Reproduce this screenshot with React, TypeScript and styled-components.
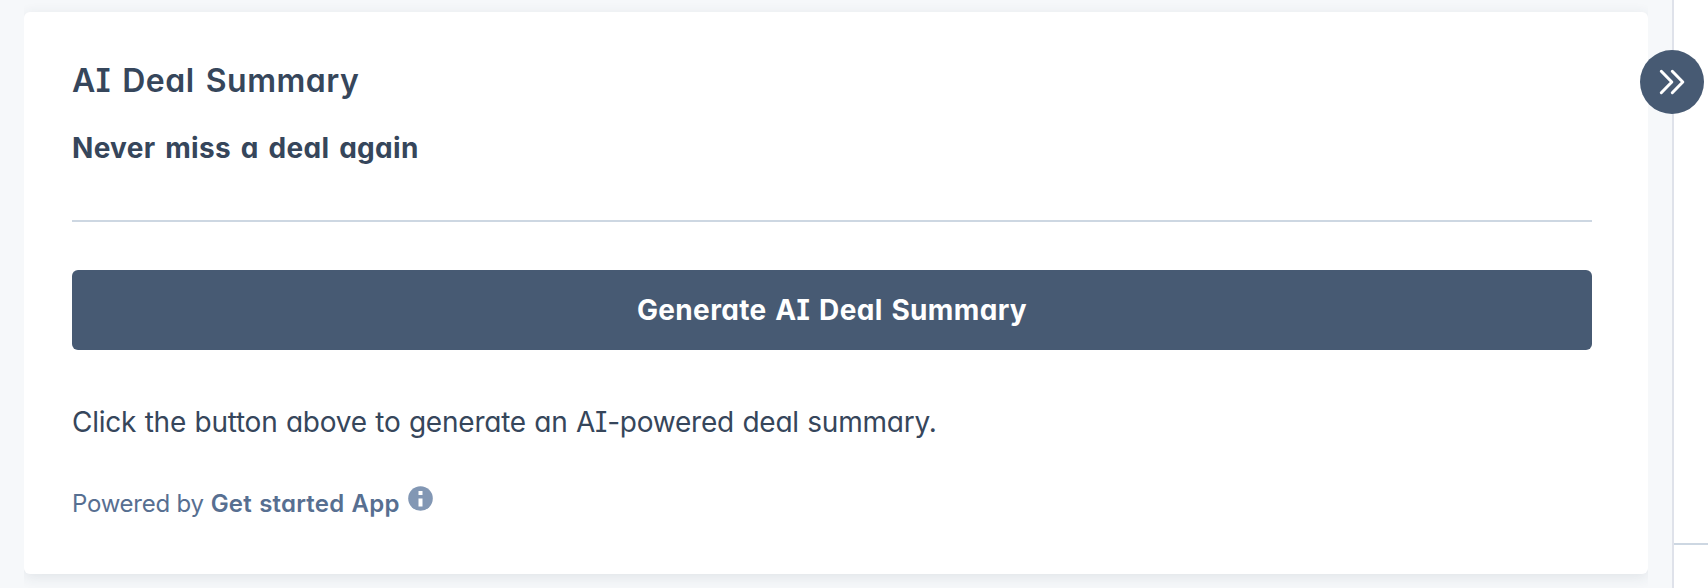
import React from "react";
import styled, { createGlobalStyle } from "styled-components";

const Global = createGlobalStyle`
  * { box-sizing: border-box; }
  body {
    margin: 0;
    background: #fff;
    font-family: Inter, "Noto Sans", sans-serif;
    font-feature-settings: "cv11", "cv08";
  }
`;

const Page = styled.div`
  display: flex;
  height: 588px;
  overflow: hidden;
  color: #36465b;
`;

const Main = styled.main`
  flex: 1;
  padding: 0 24px;
  background: #f6f8fa;
`;

/* Clips the card shadow at the left and right edges of the column */
const CardColumn = styled.div`
  height: 100%;
  padding-top: 12px;
  overflow: hidden;
`;

const Card = styled.section`
  height: 562px;
  padding: 49px 56px 0 48px;
  display: flex;
  flex-direction: column;
  background: #fff;
  border-radius: 6px;
  box-shadow: 0 3px 14px rgba(45, 62, 80, 0.11);
`;

const Title = styled.h2`
  margin: 0;
  font-size: 32px;
  line-height: 40px;
  font-weight: 600;
  letter-spacing: 0.53px;
  word-spacing: 2.4px;
`;

const Subtitle = styled.h3`
  margin: 23px 0 0;
  font-size: 28px;
  line-height: 48px;
  font-weight: 700;
  letter-spacing: 0.3px;
  word-spacing: 2.9px;
`;

const Divider = styled.hr`
  width: 100%;
  height: 2px;
  margin: 48px 0;
  border: 0;
  background: #cdd7e2;
`;

const GenerateButton = styled.button`
  height: 80px;
  flex: none;
  border: 0;
  border-radius: 6px;
  background: #475a73;
  color: #fff;
  font: inherit;
  font-size: 28px;
  font-weight: 700;
  letter-spacing: 0.35px;
  word-spacing: 1.8px;
  font-feature-settings: inherit;
`;

const Message = styled.p`
  margin: 48px 0 0;
  font-size: 28px;
  line-height: 48px;
  letter-spacing: -0.23px;
  word-spacing: 0.8px;
`;

const Footer = styled.footer`
  display: flex;
  margin-top: 40px;
  height: 36px;
  font-size: 24px;
  line-height: 36px;
  font-weight: 400;
  letter-spacing: -0.25px;
  color: #576f91;
`;

const AppName = styled.strong`
  margin-left: 7px;
  font-weight: 600;
  letter-spacing: 0.2px;
  word-spacing: 1px;
`;

const InfoIcon = styled.svg`
  width: 25px;
  height: 25px;
  margin: -0.5px 0 0 8.5px;
`;

const Sidebar = styled.aside`
  position: relative;
  width: 36px;
  border-left: 2px solid #dfe2ea;
  background: #fff;
`;

const SidebarSection = styled.div`
  height: 545px;
  border-bottom: 2px solid #cdd7e2;
`;

const CollapseButton = styled.button`
  position: absolute;
  top: 50px;
  left: -34px;
  width: 64px;
  height: 64px;
  padding: 0;
  display: grid;
  place-items: center;
  border: 0;
  border-radius: 50%;
  background: #475a73;
`;

export default function App() {
  return (
    <>
      <Global />
      <Page>
        <Main>
          <CardColumn>
            <Card>
              <Title>AI Deal Summary</Title>
              <Subtitle>Never miss a deal again</Subtitle>
              <Divider />
              <GenerateButton>Generate AI Deal Summary</GenerateButton>
              <Message>Click the button above to generate an AI-powered deal summary.</Message>
              <Footer>
                <span>Powered by</span>
                <AppName>Get started App</AppName>
                <InfoIcon viewBox="0 0 25 25" aria-hidden="true">
                  <circle cx="12.5" cy="12.5" r="12.3" fill="#8297b4" />
                  <path d="M10.5 5h4v4h-4zM10.5 12.5h4v8h-4z" fill="#fff" />
                </InfoIcon>
              </Footer>
            </Card>
          </CardColumn>
        </Main>
        <Sidebar>
          <SidebarSection />
          <CollapseButton aria-label="Collapse sidebar">
            <svg width="64" height="64" viewBox="0 0 64 64" fill="none" stroke="#fff" strokeWidth="3" strokeLinecap="round" strokeLinejoin="round">
              <path d="M21.3 21.3 31.8 32 21.3 42.7M32.3 21.3 42.8 32 32.3 42.7" />
            </svg>
          </CollapseButton>
        </Sidebar>
      </Page>
    </>
  );
}
